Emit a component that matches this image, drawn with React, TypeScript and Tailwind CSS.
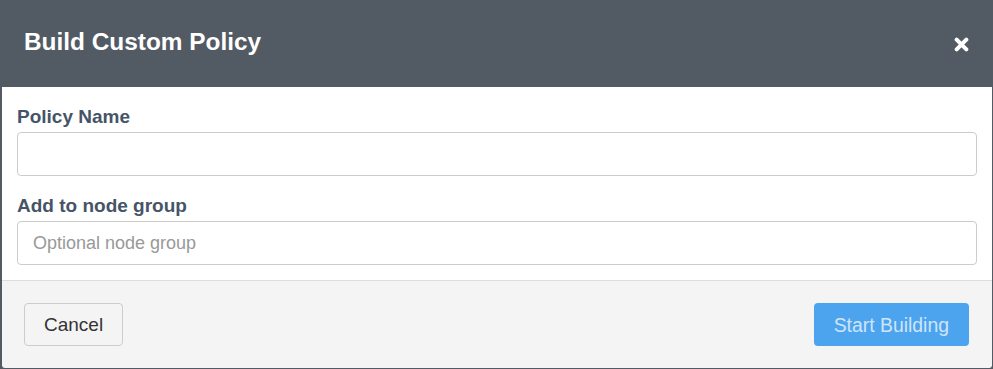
import { useState } from "react";

export default function App() {
  const [name, setName] = useState("");
  const [group, setGroup] = useState("");

  return (
    <div
      className="w-[993px] h-[369px] bg-[#525a63] overflow-hidden"
      style={{ fontFamily: '"Liberation Sans", Arial, sans-serif' }}
    >
      {/* Header */}
      <div className="h-[87px] flex items-center justify-between pl-[24px] pr-[24px]">
        <h2 className="text-[24.4px] font-bold text-white leading-none pb-[2px]">
          Build Custom Policy
        </h2>
        <button className="text-white">
          <svg width="15" height="15" viewBox="0 0 14 14" className="mt-[2px]">
            <path
              d="M2.5 2.5 L11.5 11.5 M11.5 2.5 L2.5 11.5"
              stroke="currentColor"
              strokeWidth="3.8"
              strokeLinecap="round"
            />
          </svg>
        </button>
      </div>

      {/* Body */}
      <div className="ml-[2px] mr-[1px] bg-white pl-[15px] pr-[15px] pb-[15px] border-b border-[#dddddd]">
        <div className="pt-[18px]">
          <label className="block text-[19px] leading-[23px] font-bold text-[#465468]">
            Policy Name
          </label>
          <input
            value={name}
            onChange={(e) => setName(e.target.value)}
            className="mt-[4px] w-full h-[44px] rounded-[4px] border border-[#cccccc] px-[15px] text-[18px] text-[#333] outline-none"
          />
        </div>
        <div className="pt-[18px]">
          <label className="block text-[19px] leading-[23px] font-bold text-[#465468]">
            Add to node group
          </label>
          <input
            value={group}
            onChange={(e) => setGroup(e.target.value)}
            placeholder="Optional node group"
            className="mt-[4px] w-full h-[44px] rounded-[4px] border border-[#cccccc] px-[15px] text-[18px] text-[#333] placeholder:text-[#999999] outline-none"
          />
        </div>
      </div>

      {/* Footer */}
      <div className="ml-[2px] mr-[1px] h-[87px] bg-[#f4f4f4] rounded-b-[3px] pl-[22px] pr-[23px] flex items-center justify-between">
        <button className="h-[43px] px-[19px] pt-[2px] rounded-[4px] border border-[#cccccc] bg-[#f4f4f4] text-[19px] text-[#333333]">
          Cancel
        </button>
        <button
          disabled
          className="h-[43px] px-[20px] pt-[2px] rounded-[4px] bg-[#4da4ee] text-[19.4px] text-[#cfe5fa]"
        >
          Start Building
        </button>
      </div>
    </div>
  );
}
